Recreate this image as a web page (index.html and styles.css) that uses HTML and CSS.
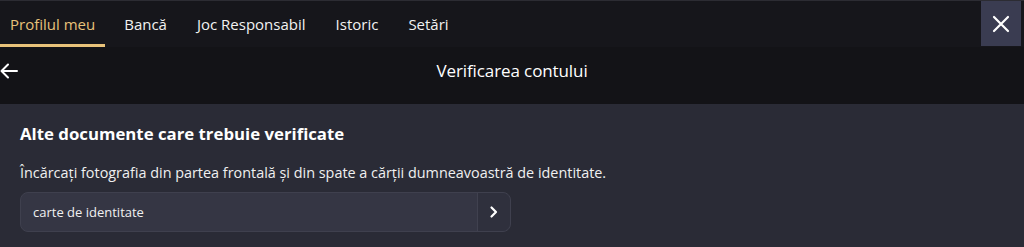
FILE: index.html
```html
<!DOCTYPE html>
<html lang="ro">
<head>
<meta charset="utf-8">
<link rel="stylesheet" href="styles.css">
</head>
<body>
<div class="page">
  <nav class="tabs">
    <div class="tab-list">
      <a class="tab active">Profilul meu</a>
      <a class="tab">Bancă</a>
      <a class="tab">Joc Responsabil</a>
      <a class="tab">Istoric</a>
      <a class="tab">Setări</a>
    </div>
    <button class="close" aria-label="Închide">
      <svg width="18" height="18" viewBox="0 0 18 18"><path d="M2 2L16 16M16 2L2 16" stroke="#fff" stroke-width="2.2" stroke-linecap="round"/></svg>
    </button>
  </nav>
  <header class="subhead">
    <button class="back" aria-label="Înapoi">
      <svg width="18" height="16" viewBox="0 0 18 16"><path d="M17 8H2M8 1.5L1.5 8L8 14.5" stroke="#fff" stroke-width="2" fill="none" stroke-linecap="round" stroke-linejoin="round"/></svg>
    </button>
    <h1 class="title">Verificarea contului</h1>
  </header>
  <main class="content">
    <h2 class="heading">Alte documente care trebuie verificate</h2>
    <p class="desc">Încărcați fotografia din partea frontală și din spate a cărţii dumneavoastră de identitate.</p>
    <div class="select">
      <span class="select-label">carte de identitate</span>
      <span class="select-arrow">
        <svg width="10" height="14" viewBox="0 0 10 14"><path d="M2.5 2.5L7 7L2.5 11.5" stroke="#fff" stroke-width="2.2" fill="none" stroke-linecap="round" stroke-linejoin="round"/></svg>
      </span>
    </div>
  </main>
</div>
</body>
</html>
```
FILE: styles.css
```css
* { box-sizing: border-box; }
html, body { margin: 0; padding: 0; }
body {
  background: #2a2b36;
  font-family: "Open Sans", "Noto Sans", sans-serif;
  color: #fff;
  width: 1024px;
  height: 247px;
  overflow: hidden;
}
.page { display: flex; flex-direction: column; height: 247px; }
.tabs {
  display: flex;
  justify-content: space-between;
  background: #16161b;
  border-top: 1px solid #2c2c33;
  height: 47px;
  padding-right: 3px;
}
.tab-list { display: flex; }
.tab {
  display: flex;
  align-items: center;
  padding: 3px 10px 0;
  margin-right: 10px;
  height: 46px;
  font-size: 15px;
  color: #f2f2f2;
  border-bottom: 3px solid transparent;
}
.tab.active { color: #e8c27a; border-bottom-color: #e8c27a; margin-right: 9px; }
.close {
  width: 40px;
  height: 45px;
  border: 0;
  background: #3a3c51;
  display: flex;
  align-items: center;
  justify-content: center;
  padding: 0;
}
.subhead {
  position: relative;
  display: flex;
  align-items: center;
  justify-content: center;
  height: 57px;
  background: #131317;
}
.back {
  position: absolute;
  left: 0;
  top: 14px;
  background: none;
  border: 0;
  padding: 0;
  width: 20px;
  height: 20px;
  display: flex;
  align-items: center;
}
.title {
  margin: -10px 0 0;
  font-size: 17px;
  font-weight: 400;
  letter-spacing: -0.1px;
}
.content {
  flex: 1;
  background: #2a2b36;
  padding: 19px 20px 0;
}
.heading {
  margin: 0;
  font-size: 16.8px;
  font-weight: 700;
  line-height: 22px;
}
.desc {
  margin: 18px 0 9px;
  font-size: 14.4px;
  line-height: 20px;
  color: #f0f0f0;
}
.select {
  display: flex;
  width: 491px;
  height: 40px;
  background: #353644;
  border: 1px solid #3f404e;
  border-radius: 8px;
}
.select-label {
  flex: 1;
  display: flex;
  align-items: center;
  padding-left: 12px;
  font-size: 13px;
  color: #f0f0f0;
}
.select-arrow {
  width: 33px;
  border-left: 1px solid #40414f;
  display: flex;
  align-items: center;
  justify-content: center;
  background: #2f303d;
  border-radius: 0 8px 8px 0;
}
```
